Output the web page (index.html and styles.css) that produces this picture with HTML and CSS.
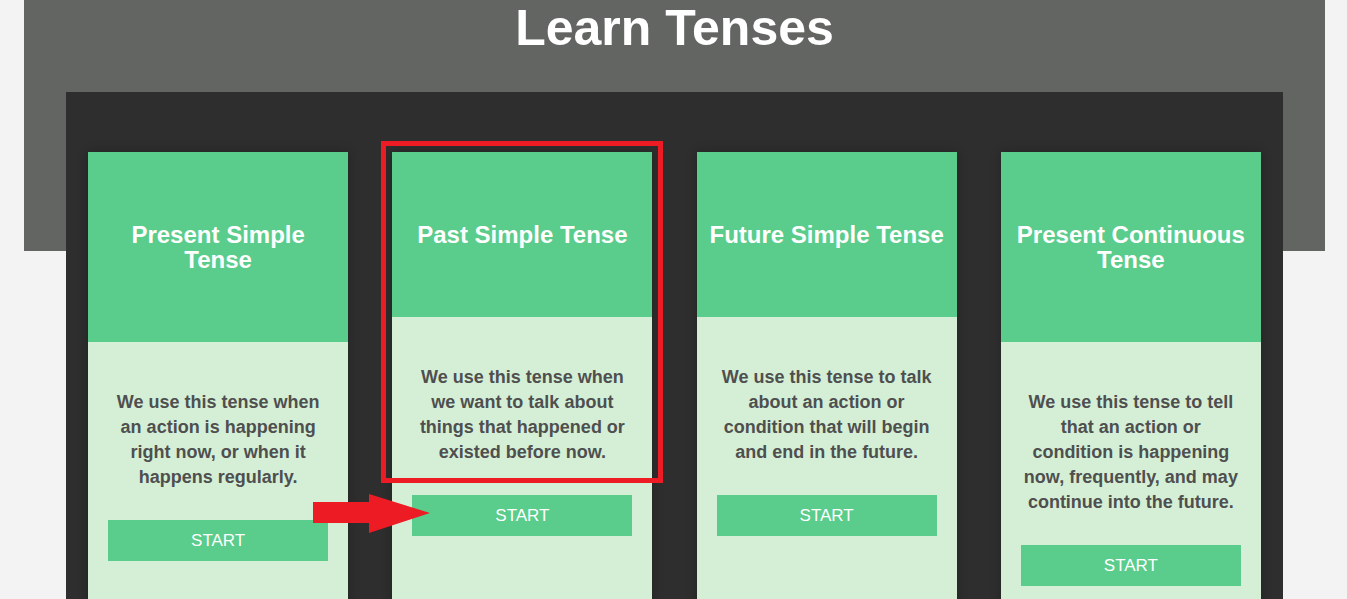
FILE: index.html
```html
<!DOCTYPE html>
<html lang="en">
<head>
<meta charset="utf-8">
<title>Learn Tenses</title>
<link rel="stylesheet" href="styles.css">
</head>
<body>
  <header class="hero">
    <h1 class="hero-title">Learn Tenses</h1>
  </header>
  <main class="board">
    <section class="card">
      <div class="card-head"><h2 class="card-title">Present Simple Tense</h2></div>
      <div class="card-body">
        <p class="card-text">We use this tense when an action is happening right now, or when it happens regularly.</p>
        <button class="card-btn">START</button>
      </div>
    </section>
    <section class="card">
      <div class="card-head"><h2 class="card-title">Past Simple Tense</h2></div>
      <div class="card-body">
        <p class="card-text">We use this tense when we want to talk about things that happened or existed before now.</p>
        <button class="card-btn">START</button>
      </div>
    </section>
    <section class="card">
      <div class="card-head"><h2 class="card-title">Future Simple Tense</h2></div>
      <div class="card-body">
        <p class="card-text">We use this tense to talk about an action or condition that will begin and end in the future.</p>
        <button class="card-btn">START</button>
      </div>
    </section>
    <section class="card">
      <div class="card-head"><h2 class="card-title">Present Continuous Tense</h2></div>
      <div class="card-body">
        <p class="card-text">We use this tense to tell that an action or condition is happening now, frequently, and may continue into the future.</p>
        <button class="card-btn">START</button>
      </div>
    </section>
  </main>
  <div class="mark-box"></div>
  <svg class="mark-arrow" width="120" height="42" viewBox="0 0 120 42" aria-hidden="true">
    <polygon points="0,8 56,8 56,0 117,19 56,39 56,29 0,29" fill="#ed1c24"/>
  </svg>
</body>
</html>
```
FILE: styles.css
```css
html, body {
  margin: 0;
  padding: 0;
}
body {
  background: #f3f3f3;
  font-family: "Liberation Sans", Arial, sans-serif;
  overflow: hidden;
  position: relative;
  min-height: 599px;
}
.hero {
  margin-left: 24px;
  width: 1301px;
  height: 251px;
  background: #636562;
}
.hero-title {
  margin: 0;
  text-align: center;
  color: #ffffff;
  font-size: 50px;
  font-weight: bold;
  line-height: 57px;
}
.board {
  width: 1217px;
  margin: -159px 0 0 66px;
  padding: 60px 0 60px;
  background: #2d2e2d;
  display: flex;
  justify-content: space-around;
  align-items: flex-start;
}
.card {
  width: 260px;
  box-shadow: 0 0 10px rgba(0, 0, 0, 0.25);
}
.card-head {
  background: #5acc8b;
  padding: 70px 10px;
}
.card-title {
  margin: 0;
  color: #ffffff;
  font-size: 24px;
  font-weight: bold;
  line-height: 25px;
  text-align: center;
}
.card-body {
  background: #d5efd6;
  padding: 48px 20px 100px;
  text-align: center;
}
.card-text {
  margin: 0 0 30px;
  color: #4f4f4f;
  font-size: 18px;
  font-weight: bold;
  line-height: 25px;
}
.card-btn {
  display: block;
  width: 100%;
  height: 41px;
  border: none;
  padding: 0;
  background: #5acc8b;
  color: #ffffff;
  font-family: "Liberation Sans", Arial, sans-serif;
  font-size: 17px;
}
.mark-box {
  position: absolute;
  left: 381px;
  top: 141px;
  width: 272px;
  height: 332px;
  border: 5px solid #ed1c24;
}
.mark-arrow {
  position: absolute;
  left: 313px;
  top: 494px;
}
```
